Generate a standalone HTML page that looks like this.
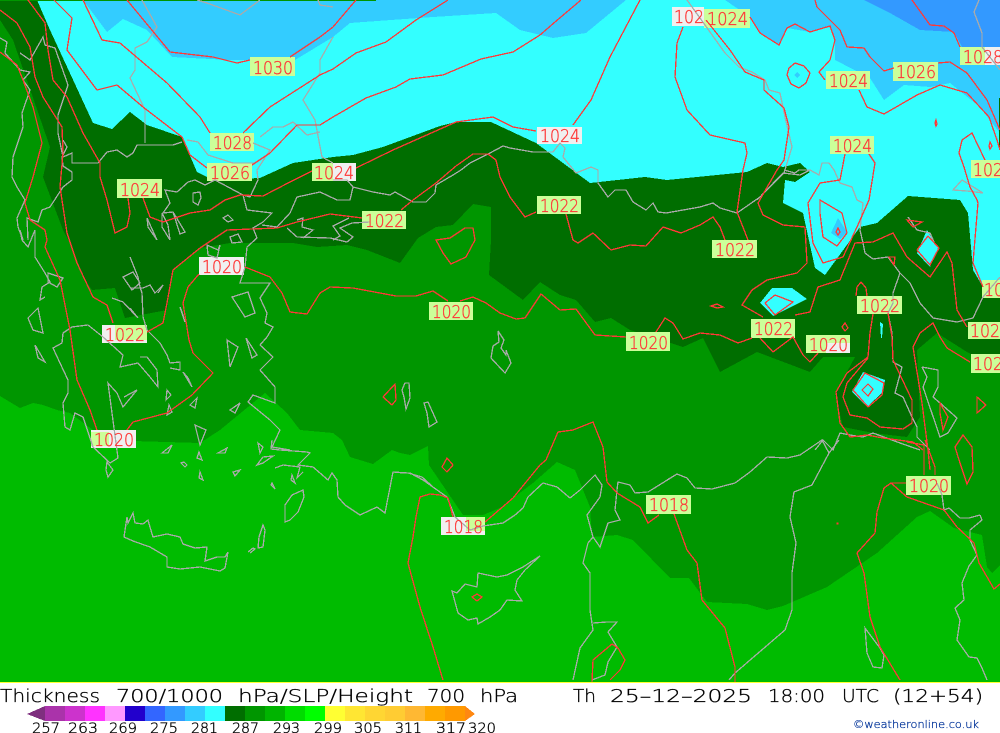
<!DOCTYPE html>
<html><head><meta charset="utf-8"><title>Thickness 700/1000 hPa</title>
<style>
html,body{margin:0;padding:0;background:#fff;width:1000px;height:733px;overflow:hidden}
svg{display:block}
.g{fill:none;stroke:#aaa;stroke-width:1.3;shape-rendering:crispEdges}
.r{fill:none;stroke:#ff3838;stroke-width:1.3;shape-rendering:crispEdges}
.f polygon,.f rect{shape-rendering:crispEdges}
.y{fill:#ccff99}.w{fill:#f0f0f0}
.l text{font:200 18px "DejaVu Sans","Liberation Sans",sans-serif;fill:#ff3838;stroke:#ff3838;stroke-width:.35}
.t text{font:200 18px "DejaVu Sans","Liberation Sans",sans-serif;fill:#000;stroke:#000;stroke-width:.3}
.n text{font:200 14px "DejaVu Sans","Liberation Sans",sans-serif;fill:#000;stroke:#000;stroke-width:.35}
</style></head><body>
<svg width="1000" height="733" viewBox="0 0 1000 733" xmlns="http://www.w3.org/2000/svg">
<g class="f">
<rect x="0" y="0" width="1000" height="682" fill="#00bb00"/>
<polygon fill="#009600" points="0,0 1000,0 1000,565 992,573 987,567 982,535 954,528 930,511 917,517 877,553 827,587 783,606 767,610 747,604 707,602 689,578 670,578 633,540 617,535 592,537 590,507 575,470 557,462 533,483 513,498 500,508 483,515 463,515 429,465 428,446 410,455 400,453 392,450 373,464 350,457 342,440 333,433 300,430 287,413 265,393 220,430 200,443 133,441 93,430 70,413 57,410 43,405 33,403 20,408 10,402 0,396"/>
<polygon fill="#006e00" points="0,0 37,0 50,30 93,123 112,129 130,112 147,125 182,137 197,172 213,180 260,178 293,163 333,157 353,155 383,147 440,126 456,122 491,122 536,143 590,183 645,177 667,180 747,172 767,163 783,167 800,163 810,172 795,182 785,180 783,203 803,213 815,268 825,275 860,227 877,223 908,196 960,200 968,213 973,270 983,287 1000,296 1000,370 967,352 937,333 917,350 920,417 907,437 873,433 843,427 835,393 847,372 855,357 823,357 810,372 757,352 720,372 703,338 683,347 630,330 611,318 595,322 576,300 560,295 540,282 523,300 489,275 491,240 491,207 473,204 453,225 436,227 418,238 400,263 367,250 347,245 317,247 293,243 257,243 230,243 200,248 173,270 167,310 125,318 115,288 92,290 85,280 72,247 63,230 43,177 50,147 13,40 0,20"/>
<polygon fill="#33ffff" points="37,0 1000,0 1000,296 983,287 973,270 968,213 960,200 908,196 877,223 860,227 825,275 815,268 803,213 783,203 785,180 795,182 810,172 800,163 783,167 767,163 747,172 667,180 645,177 590,183 536,143 491,122 456,122 440,126 383,147 353,155 333,157 293,163 260,178 213,180 197,172 182,137 147,125 130,112 112,129 93,123 50,30"/>
<polygon fill="#33ffff" points="760,303 772,288 792,288 807,299 773,316"/>
<polygon fill="#33ffff" points="927,230 938,248 930,267 917,253"/>
<polygon fill="#33ffff" points="863,372 885,380 883,392 867,407 852,392"/>
<polygon fill="#33ffff" points="880,322 883,324 882,338 881,338"/>
<polygon fill="#33ccff" points="83,0 107,32 123,19 147,30 172,57 230,60 295,60 333,37 350,23 391,20 433,17 496,13 520,30 553,38 586,33 626,0"/>
<polygon fill="#33ccff" points="725,0 750,17 760,33 779,45 787,28 810,32 830,27 835,43 835,60 870,78 884,100 904,85 930,87 950,83 980,107 992,123 1000,133 1000,0"/>
<polygon fill="#33ccff" points="838,218 847,232 840,239 831,233"/>
<polygon fill="#33ccff" points="797,72 800,75 797,78 794,75"/>
<polygon fill="#3399ff" points="864,0 890,13 920,30 954,32 962,47 1000,47 1000,0"/>
<rect x="0" y="0" width="376" height="1" fill="#009600"/>
<rect x="999" y="98" width="1" height="50" fill="#006e00"/>
<rect x="0" y="682" width="1000" height="1" fill="#ffff33"/>
</g>
<g>
<rect class="y" x="250" y="57" width="45" height="19"/><rect class="y" x="210" y="133" width="44" height="18"/><rect class="y" x="207" y="163" width="45" height="18"/><rect class="y" x="117" y="179" width="45" height="19"/><rect class="y" x="312" y="163" width="44" height="18"/><rect class="w" x="333" y="163" width="23" height="18"/>
<rect class="w" x="537" y="127" width="45" height="17"/><rect class="y" x="537" y="196" width="44" height="18"/><rect class="y" x="362" y="211" width="44" height="18"/><rect class="y" x="712" y="240" width="45" height="18"/><rect class="y" x="857" y="296" width="45" height="18"/><rect class="y" x="751" y="319" width="44" height="19"/>
<rect class="y" x="806" y="335" width="44" height="18"/><rect class="w" x="826" y="343" width="24" height="10"/>
<rect class="y" x="968" y="322" width="32" height="17"/><rect class="y" x="971" y="354" width="29" height="19"/><rect class="y" x="982" y="280" width="18" height="18"/>
<rect class="y" x="826" y="71" width="44" height="18"/><rect class="y" x="830" y="136" width="44" height="18"/><rect class="y" x="893" y="62" width="45" height="19"/><rect class="y" x="960" y="47" width="40" height="18"/><rect class="w" x="985" y="47" width="15" height="18"/><rect class="y" x="971" y="160" width="29" height="18"/>
<rect class="w" x="672" y="7" width="32" height="19"/><rect class="y" x="704" y="9" width="46" height="19"/>
<rect class="w" x="199" y="257" width="45" height="18"/>
<rect class="w" x="102" y="325" width="45" height="18"/><rect class="y" x="115" y="325" width="32" height="15"/>
<rect class="w" x="91" y="430" width="45" height="18"/><rect class="y" x="91" y="432" width="18" height="14"/>
<rect class="y" x="429" y="302" width="44" height="18"/><rect class="y" x="626" y="332" width="44" height="19"/>
<rect class="w" x="441" y="517" width="44" height="18"/><rect class="y" x="466" y="517" width="19" height="14"/>
<rect class="y" x="646" y="495" width="45" height="19"/><rect class="y" x="906" y="476" width="45" height="19"/>
</g>
<g class="g">
<polyline points="0,38 7,42 5,53 20,70 30,72 23,80 30,90 22,113 23,127 13,157 12,177 17,187 25,200 17,218 18,227 23,240 20,230"/>
<polyline points="20,53 30,60 43,37 45,45 55,48 68,85 58,115 58,133 63,157 72,153 72,163 98,163 107,152 117,150 127,157 133,153 137,145 152,145 173,145 182,142"/>
<polyline points="63,140 67,147 62,157 63,166 72,172 72,180 63,187 50,207 42,210 38,222 27,218 28,240"/>
<polyline points="197,0 207,3 240,15 260,0"/>
<polyline points="142,0 157,27 147,42 135,48 135,70 130,78 145,110 145,143"/>
<polyline points="318,0 320,5 333,7"/>
<polyline points="333,37 320,60 320,73 303,100 315,120 322,157 333,163"/>
<polyline points="260,137 273,127 283,127 293,122 307,135 320,132"/>
<polyline points="187,140 198,142 208,155 233,163 255,163"/>
<polyline points="253,143 270,150 257,170 258,180 250,197 243,195"/>
<polyline points="215,180 243,195 247,210 272,213 263,222 253,228 257,238 247,247 245,267 240,283 270,283 260,298 267,313 265,323 273,327 267,337"/>
<polyline points="262,225 277,227 290,213 297,197 320,192 337,200 350,200 353,187"/>
<polyline points="287,228 297,237 330,238 347,242 353,237 340,228 352,223 370,222"/>
<polyline points="297,220 303,218 302,227 313,230 303,238"/>
<polyline points="188,182 195,180 205,185 215,180"/>
<polyline points="188,182 177,192 165,190 170,203 163,213 173,212 185,232 180,234 173,212"/>
<polygon points="147,218 157,240 148,227"/>
<polygon points="162,213 168,225 170,240 162,227"/>
<polygon points="193,193 200,192 201,198 198,205 193,202"/>
<polygon points="223,218 228,215 233,220 228,222"/>
<polygon points="230,237 238,234 242,242 232,243"/>
<polygon points="207,245 218,250 220,245 217,258 208,255"/>
<polyline points="333,180 347,180 353,187 373,192 390,195 395,192 413,202 426,202 435,193 436,185 453,175 461,170 470,163 490,153 503,146 510,148 533,152 553,152 560,143 565,148 563,157 576,173 591,167 598,170 598,183 608,197 615,190 626,190 633,202 646,210 653,203 658,212 666,213 700,207 713,203 720,208 737,213 760,197 783,173 800,175 810,170"/>
<polyline points="349,218 333,226 340,236 333,240"/>
<polyline points="687,0 705,25 725,53 739,67 752,72 765,80 769,90 780,93 785,117 792,147 784,173 757,200"/>
<polyline points="784,170 795,173 799,170 810,170 819,175 822,163 829,163 834,170 840,183 852,187 857,200 863,203 860,230 863,243 865,253 873,259 888,257 900,273 910,283 920,303 933,318 957,322 973,318 983,297 1000,277"/>
<polyline points="900,273 893,293 893,303 888,313 892,333 893,362 902,367 895,393 903,397 912,417 917,427 917,437 930,450"/>
<polyline points="815,450 823,440 833,450 840,433 850,435 863,437 873,433 900,443 920,450"/>
<polyline points="667,480 677,474 687,478 695,488 712,489 735,483 750,472 767,457 787,458 800,455 822,440 829,453 839,440"/>
<polyline points="829,453 812,485 794,492 790,517 796,543 792,573 792,610 785,630 735,673 729,680"/>
<polyline points="400,473 410,473 423,480 447,497 455,517 470,530 483,526 503,523 515,515 523,508 528,497 543,483 557,487 570,498 580,490 595,475 602,485 600,497 587,515 593,537 588,543 583,563 590,573 590,610 593,630 580,648 573,680"/>
<polyline points="593,537 600,547 608,523 620,520 615,510 617,490 618,482 630,485 635,493 648,492 677,474"/>
<polyline points="593,623 607,622 617,622 608,632 617,647 608,662 605,675 592,680"/>
<polygon points="540,556 523,567 507,575 497,577 478,573 477,587 465,584 457,593 452,591 458,613 468,620 477,618 478,624 490,617 500,610 507,600 522,601 515,590 517,580 525,570"/>
<polygon points="127,517 124,537 133,541 150,547 167,557 167,567 180,569 200,567 220,571 225,568 228,552 225,557 217,557 205,561 207,547 195,548 183,544 180,537 167,534 153,537 150,527 148,520 143,524 135,523 133,513 128,523"/>
<polygon points="303,490 292,495 285,505 285,522 290,520 298,512 304,497"/>
<polygon points="263,525 259,537 258,548 263,547 265,530"/>
<polyline points="248,552 253,548 255,549 250,553"/>
<polyline points="272,440 271,449 280,450 307,452 310,453 298,465 313,467 320,473 328,480 332,473 337,480 338,497 345,505 360,515 377,507 385,513 393,472 408,473 422,477 433,487"/>
<polygon points="258,443 263,447 260,453"/><polygon points="257,465 263,457 273,456 263,463"/><polyline points="275,468 283,465 300,467 297,478 303,472"/>
<polygon points="292,475 295,483 291,480"/><polygon points="162,453 172,445 168,453"/><polygon points="200,472 203,480 199,478"/><polygon points="107,462 113,470 108,477 106,470"/><polygon points="233,472 240,470 235,476"/><polygon points="272,483 275,489 271,485"/><polygon points="199,452 202,460 197,458"/><polygon points="218,453 227,448 225,453"/>
<polygon points="181,463 184,462 187,465 185,467"/>
<polyline points="20,230 22,240 28,247 35,230 35,257 45,273 50,282 42,287 40,300 45,297"/>
<polyline points="72,327 88,325 103,337 123,355 120,367 138,363 150,377 158,387 157,370 147,357 140,357"/>
<polyline points="72,327 63,333 62,343 53,348 60,363 68,380 68,393 63,403 65,427 70,430 75,413 83,417 93,447 110,463 118,458 108,383 117,393 123,407 137,390 124,397"/>
<polyline points="147,330 160,343 167,355 170,363 180,362 180,370 170,368"/>
<polyline points="130,257 138,277 140,287 142,293 143,317 147,330"/>
<polyline points="130,288 143,288 150,285 155,293 163,285 158,293"/>
<polyline points="112,298 123,302 138,318 130,308"/>
<polygon points="123,277 133,272 140,283 132,290"/>
<polygon points="48,273 63,278 57,287 48,282"/>
<polygon points="28,318 38,308 43,333 33,330"/>
<polygon points="35,345 45,362 38,358"/>
<polygon points="232,297 248,292 255,313 245,317"/>
<polygon points="180,307 185,322 182,312"/>
<polygon points="227,340 238,347 230,367"/>
<polygon points="246,338 257,355 252,358"/>
<polygon points="183,372 192,387 188,378"/>
<polygon points="167,390 171,395 166,400"/><polygon points="169,405 172,412 167,415"/><polygon points="190,405 197,398 195,408"/><polygon points="195,425 206,430 200,445"/>
<polygon points="230,410 240,403 235,413"/>
<polyline points="267,337 260,345 273,357 260,370 275,387 275,403 253,395 248,402 270,420 280,430 272,447 290,450"/>
<polygon points="498,331 504,340 501,348 506,355 506,350 511,363 505,373 491,358 493,346 499,342"/>
<polygon points="405,383 409,383 410,398 406,409 404,397 402,390"/>
<polygon points="424,403 428,402 437,422 429,427 427,413"/>
<polygon points="865,628 867,653 873,667 882,668 884,655 880,648"/>
<polyline points="980,515 969,518 960,518 949,508 944,510 942,495 937,483"/>
<polyline points="980,515 982,520 970,530 970,540 977,555 969,566 962,583 964,600 955,608 960,620 957,640 969,657 977,658 982,668 987,680"/>
<polyline points="922,367 938,370 938,387 933,397 940,403 957,418 948,433 940,437 923,387 927,377 922,367"/>
<polygon points="953,190 962,180 983,193 967,191"/>
<polyline points="979,0 974,12 982,33 982,47 1000,70"/>
<polyline points="908,217 917,230 930,233 934,242"/>
</g>
<g class="r">
<polyline points="28,0 45,23 48,50 53,80 67,97 83,133 100,163 100,177 107,200 115,233 127,227 130,213 128,198"/>
<polyline points="0,10 17,23 30,47 35,77 43,97 62,127 63,153 60,187 67,233 77,263 93,297 107,305 113,323"/>
<polyline points="0,52 17,65 23,80 33,107 42,143 33,177 25,203 30,220 45,230 47,240 45,247 60,280 70,330 77,380 90,410 97,430"/>
<polyline points="147,332 163,323 167,303 173,270 200,248 227,230 277,228 297,222 330,214 362,218"/>
<polyline points="401,210 413,200 436,183 456,166 473,154 488,154 496,160 500,177 510,197 525,217 536,212"/>
<polyline points="566,214 573,240 578,243 593,233 611,250 630,245 646,246 663,227 681,233 700,225 713,217 720,227 725,240"/>
<polyline points="748,240 737,212 743,170 747,153 745,143 710,135 687,110 675,77 677,43 683,27"/>
<polyline points="245,267 270,277 282,293 290,312 307,314 320,293 330,287 353,288 396,296 416,296 433,291 448,301"/>
<polyline points="460,301 473,297 486,303 500,313 516,319 525,318 541,294 560,310 576,309 595,335 626,337"/>
<polyline points="656,332 665,318 673,323 683,339 700,333 720,335 738,343 752,338"/>
<polyline points="760,338 773,352 793,337 803,355 810,362 818,353"/>
<polyline points="199,274 188,287 183,303 189,340 193,353 213,373 192,395 167,413 133,422 127,430"/>
<polyline points="127,0 170,52 213,57 237,63 250,60"/>
<polyline points="290,57 320,37 333,27 356,0"/>
<polyline points="83,0 102,40 120,43 167,83 200,117 210,133"/>
<polyline points="243,133 270,107 320,75 333,69 356,53 386,42 416,20 448,0"/>
<polyline points="54,0 72,18 67,50 97,90 117,85 143,107 182,137 190,155 207,168"/>
<polyline points="252,165 270,153 297,125 320,125 333,117 366,98 396,87 410,79 443,75 481,59 513,52 540,35 555,22 581,0"/>
<polyline points="356,168 393,150 456,122 493,117 513,127 536,131"/>
<polyline points="573,125 591,100 610,57 640,0"/>
<polyline points="312,171 290,182 263,196 240,195 225,200 210,210 190,213 163,222 150,217 143,198"/>
<polyline points="750,17 760,33 779,45 787,28 795,24 810,32 830,26 835,40 830,60 819,72 825,80"/>
<polyline points="859,90 867,107 884,114 917,95 940,85 967,93 989,117 997,140 1000,150"/>
<polyline points="706,20 730,50 745,72 764,80 764,90 784,108 789,127 784,160 777,170 758,203 763,215 783,225 805,227 807,263 797,273 767,280 752,290 742,305 763,317"/>
<polyline points="894,68 884,71 870,57 864,48 847,47 840,30 817,7 815,0"/>
<polyline points="938,63 950,62 967,73 987,100 997,123 1000,130"/>
<polyline points="960,47 954,33 944,26 930,25 912,0"/>
<polygon points="795,63 804,66 810,73 806,83 799,88 791,84 787,75 789,68"/>
<polygon points="936,120 937,124 936,126 935,123"/><polygon points="990,142 992,146 990,149 989,146"/>
<polyline points="985,160 972,133 962,140 959,153 964,167 970,187 977,200 978,203 973,263 983,287"/>
<polyline points="845,154 840,180 820,183 808,203 813,243 823,263 843,257 857,227 869,200 875,163 869,154"/>
<polygon points="820,200 842,213 847,233 837,246 823,237 820,213"/>
<polygon points="838,228 840,232 838,235 836,232"/>
<polyline points="795,315 810,312 818,287 840,280 855,243 873,242 893,233 907,257 930,277 947,252 952,263 957,310 967,327"/>
<polygon points="765,303 775,295 793,302 775,315"/>
<polygon points="711,306 717,304 723,307 717,308"/>
<polygon points="917,250 928,236 939,248 930,265"/>
<polygon points="907,220 922,222 913,227"/>
<polygon points="889,257 895,257 894,265"/>
<polyline points="856,296 857,287 861,282 866,288 867,296"/>
<polygon points="842,327 845,323 848,328 845,331"/>
<polyline points="873,314 870,333 868,357 847,373 836,392 840,423 850,437 867,435 883,438 913,442 923,450"/>
<polyline points="888,313 892,337 893,360 912,400 912,423 903,429 880,427 867,418 850,415 843,397 847,383 868,358"/>
<polygon points="853,390 865,373 884,383 882,395 868,407"/>
<polygon points="862,390 868,384 873,389 868,396"/>
<polyline points="970,362 947,348 940,337 933,323 920,333 913,347 922,403 928,450 930,470"/>
<polyline points="907,442 924,445 924,475"/><polyline points="925,440 935,467 935,475"/>
<polyline points="906,483 891,483 884,488 877,512 875,533 857,553 864,573 870,617 880,647 900,680"/>
<polyline points="891,483 907,497 944,510 957,527 974,543 979,563 994,589 1000,584"/>
<polygon points="955,447 963,435 972,447 973,472 967,484 960,463"/>
<polygon points="977,397 986,405 977,413"/>
<polygon points="940,403 948,417 943,430 940,413"/>
<rect x="837" y="523" width="1" height="1"/>
<polyline points="659,515 648,523 640,507 617,493 607,482 603,447 593,422 573,430 558,432 546,460 540,465 513,498 485,522"/>
<polyline points="453,517 448,498 440,495 430,494 420,497 416,517 413,537 408,563 420,607 433,647 443,680"/>
<polyline points="674,514 687,550 697,563 702,600 725,628 735,667 735,682"/>
<polyline points="592,682 593,660 612,644 618,648 625,660 620,670 610,680"/>
<polygon points="472,597 477,594 482,597 477,601"/>
<polygon points="442,467 447,458 453,465 447,472"/>
<polygon points="436,240 450,238 465,228 473,228 475,240 466,257 451,264 443,253"/>
<polygon points="383,397 395,384 396,400 392,405"/>
</g>
<g class="l">
<text x="253" y="74" textLength="40" lengthAdjust="spacingAndGlyphs">1030</text>
<text x="213" y="149" textLength="39" lengthAdjust="spacingAndGlyphs">1028</text>
<text x="210" y="179" textLength="40" lengthAdjust="spacingAndGlyphs">1026</text>
<text x="120" y="196" textLength="40" lengthAdjust="spacingAndGlyphs">1024</text>
<text x="314" y="179" textLength="40" lengthAdjust="spacingAndGlyphs">1024</text>
<text x="540" y="142" textLength="40" lengthAdjust="spacingAndGlyphs">1024</text>
<text x="540" y="212" textLength="39" lengthAdjust="spacingAndGlyphs">1022</text>
<text x="365" y="227" textLength="39" lengthAdjust="spacingAndGlyphs">1022</text>
<text x="715" y="256" textLength="40" lengthAdjust="spacingAndGlyphs">1022</text>
<text x="860" y="312" textLength="40" lengthAdjust="spacingAndGlyphs">1022</text>
<text x="754" y="335" textLength="39" lengthAdjust="spacingAndGlyphs">1022</text>
<text x="809" y="351" textLength="39" lengthAdjust="spacingAndGlyphs">1020</text>
<text x="970" y="337" textLength="30" lengthAdjust="spacingAndGlyphs">102</text>
<text x="973" y="370" textLength="30" lengthAdjust="spacingAndGlyphs">102</text>
<text x="984" y="296" textLength="20" lengthAdjust="spacingAndGlyphs">10</text>
<text x="829" y="87" textLength="39" lengthAdjust="spacingAndGlyphs">1024</text>
<text x="833" y="152" textLength="39" lengthAdjust="spacingAndGlyphs">1024</text>
<text x="896" y="78" textLength="40" lengthAdjust="spacingAndGlyphs">1026</text>
<text x="963" y="63" textLength="40" lengthAdjust="spacingAndGlyphs">1028</text>
<text x="973" y="176" textLength="30" lengthAdjust="spacingAndGlyphs">102</text>
<text x="674" y="23" textLength="30" lengthAdjust="spacingAndGlyphs">102</text>
<text x="707" y="25" textLength="41" lengthAdjust="spacingAndGlyphs">1024</text>
<text x="202" y="273" textLength="40" lengthAdjust="spacingAndGlyphs">1020</text>
<text x="105" y="341" textLength="40" lengthAdjust="spacingAndGlyphs">1022</text>
<text x="94" y="446" textLength="40" lengthAdjust="spacingAndGlyphs">1020</text>
<text x="432" y="318" textLength="39" lengthAdjust="spacingAndGlyphs">1020</text>
<text x="629" y="349" textLength="39" lengthAdjust="spacingAndGlyphs">1020</text>
<text x="444" y="533" textLength="39" lengthAdjust="spacingAndGlyphs">1018</text>
<text x="649" y="511" textLength="40" lengthAdjust="spacingAndGlyphs">1018</text>
<text x="909" y="492" textLength="40" lengthAdjust="spacingAndGlyphs">1020</text>
</g>
<g class="t">
<text x="0" y="702" textLength="100" lengthAdjust="spacingAndGlyphs">Thickness</text>
<text x="116" y="702" textLength="107" lengthAdjust="spacingAndGlyphs">700/1000</text>
<text x="238" y="702" textLength="175" lengthAdjust="spacingAndGlyphs">hPa/SLP/Height</text>
<text x="427" y="702" textLength="38" lengthAdjust="spacingAndGlyphs">700</text>
<text x="480" y="702" textLength="38" lengthAdjust="spacingAndGlyphs">hPa</text>
<text x="573" y="702" textLength="23" lengthAdjust="spacingAndGlyphs">Th</text>
<text x="610" y="702" textLength="142" lengthAdjust="spacingAndGlyphs">25–12–2025</text>
<text x="768" y="702" textLength="57" lengthAdjust="spacingAndGlyphs">18:00</text>
<text x="842" y="702" textLength="37" lengthAdjust="spacingAndGlyphs">UTC</text>
<text x="893" y="702" textLength="90" lengthAdjust="spacingAndGlyphs">(12+54)</text>
</g>
<g class="f">
<polygon fill="#7f2f7f" points="27,714 45,706 45,721"/>
<rect x="45" y="706" width="20" height="15" fill="#aa33aa"/><rect x="65" y="706" width="20" height="15" fill="#cc33cc"/><rect x="85" y="706" width="20" height="15" fill="#ff33ff"/><rect x="105" y="706" width="20" height="15" fill="#ff99ff"/><rect x="125" y="706" width="20" height="15" fill="#2200cc"/><rect x="145" y="706" width="20" height="15" fill="#3366ff"/><rect x="165" y="706" width="20" height="15" fill="#3399ff"/><rect x="185" y="706" width="20" height="15" fill="#33ccff"/><rect x="205" y="706" width="20" height="15" fill="#33ffff"/><rect x="225" y="706" width="20" height="15" fill="#006e00"/><rect x="245" y="706" width="20" height="15" fill="#009600"/><rect x="265" y="706" width="20" height="15" fill="#00b400"/><rect x="285" y="706" width="20" height="15" fill="#00dc00"/><rect x="305" y="706" width="20" height="15" fill="#00ff00"/><rect x="325" y="706" width="20" height="15" fill="#ffff33"/><rect x="345" y="706" width="20" height="15" fill="#ffe633"/><rect x="365" y="706" width="20" height="15" fill="#ffd633"/><rect x="385" y="706" width="20" height="15" fill="#ffcc33"/><rect x="405" y="706" width="20" height="15" fill="#ffb833"/><rect x="425" y="706" width="20" height="15" fill="#ffaa00"/><rect x="445" y="706" width="20" height="15" fill="#ff9900"/>
<polygon fill="#ff8811" points="465,706 475,714 465,721"/>
</g>
<g class="n">
<text x="32" y="733" textLength="28" lengthAdjust="spacingAndGlyphs">257</text>
<text x="68" y="733" textLength="30" lengthAdjust="spacingAndGlyphs">263</text>
<text x="109" y="733" textLength="28" lengthAdjust="spacingAndGlyphs">269</text>
<text x="150" y="733" textLength="28" lengthAdjust="spacingAndGlyphs">275</text>
<text x="191" y="733" textLength="27" lengthAdjust="spacingAndGlyphs">281</text>
<text x="232" y="733" textLength="27" lengthAdjust="spacingAndGlyphs">287</text>
<text x="273" y="733" textLength="27" lengthAdjust="spacingAndGlyphs">293</text>
<text x="314" y="733" textLength="28" lengthAdjust="spacingAndGlyphs">299</text>
<text x="354" y="733" textLength="28" lengthAdjust="spacingAndGlyphs">305</text>
<text x="395" y="733" textLength="27" lengthAdjust="spacingAndGlyphs">311</text>
<text x="436" y="733" textLength="30" lengthAdjust="spacingAndGlyphs">317</text>
<text x="468" y="733" textLength="28" lengthAdjust="spacingAndGlyphs">320</text>
</g>
<text x="853" y="728" textLength="126" lengthAdjust="spacingAndGlyphs" style="font:200 11px 'DejaVu Sans','Liberation Sans',sans-serif;fill:#003399;stroke:#003399;stroke-width:.3">©weatheronline.co.uk</text>
</svg>
</body></html>
